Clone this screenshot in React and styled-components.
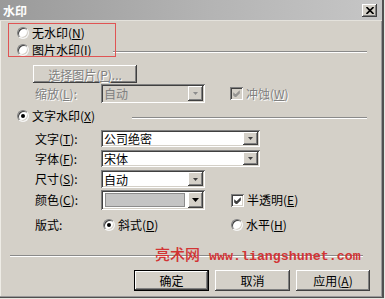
import React from "react";
import styled, { createGlobalStyle } from "styled-components";

const GlobalStyle = createGlobalStyle`
  html, body { margin: 0; padding: 0; background: #d4d0c8; }
  body {
    font-family: "Noto Sans CJK SC", "Liberation Sans", sans-serif;
    font-size: 12px;
    color: #000;
  }
  u { text-decoration: underline; text-underline-offset: 1px; }
`;

const Window = styled.div`
  position: relative;
  width: 385px;
  height: 299px;
  box-sizing: border-box;
  background: #d4d0c8;
  overflow: hidden;
  display: flex;
  flex-direction: column;
  box-shadow: inset -1px -1px #e8e6e0, inset -3px -2px #505050, inset -4px -3px #9a9a9a,
    inset 1px 0 #eeece6;
`;

const TitleBar = styled.div`
  height: 20px;
  margin-right: 3px;
  flex: none;
  display: flex;
  align-items: center;
  padding: 0 5px 0 3px;
  background: linear-gradient(to right, #9a9a9a 0%, #b4b4b4 55%, #c6c6c6 100%);
  border-bottom: 1px solid #e4e2dc;
`;

const Title = styled.span`
  color: #fff;
  font-weight: bold;
  font-size: 12px;
  letter-spacing: 0;
`;

const CloseBtn = styled.div`
  margin-left: auto;
  width: 15px;
  height: 13px;
  background: #d4d0c8;
  box-shadow: inset -1px -1px #404040, inset 1px 1px #fff, inset -2px -2px #808080;
  display: flex;
  align-items: center;
  justify-content: center;
`;

const Body = styled.div`
  display: flex;
  flex-direction: column;
`;

const Row = styled.div`
  display: flex;
  align-items: center;
  height: ${(p) => p.$h}px;
  margin-top: ${(p) => p.$mt}px;
  padding-left: ${(p) => p.$indent}px;
  padding-right: ${(p) => p.$right || 0}px;
  box-sizing: border-box;
`;

const FieldRow = styled.div`
  display: grid;
  grid-template-columns: 66px 129px auto;
  align-items: center;
  height: ${(p) => p.$h}px;
  margin-top: ${(p) => p.$mt}px;
  padding-left: 35px;
`;

const Caption = styled.span`
  white-space: nowrap;
  line-height: 14px;
  color: ${(p) => (p.$disabled ? "#808080" : "#000")};
  text-shadow: ${(p) => (p.$disabled ? "1px 1px 0 #fff" : "none")};
`;

const RadioWrap = styled.label`
  display: flex;
  align-items: center;
  gap: 3px;
  padding-left: ${(p) => p.$pad || 0}px;
`;

const RadioCircle = styled.span`
  width: 12px;
  height: 12px;
  border-radius: 50%;
  box-sizing: border-box;
  background: #fff;
  border: 1px solid;
  border-color: #808080 #f4f4f4 #f4f4f4 #808080;
  box-shadow: inset 1px 1px #404040, inset -1px -1px #d4d0c8;
  display: flex;
  align-items: center;
  justify-content: center;
  flex: none;
`;

const Dot = styled.span`
  width: 4px;
  height: 4px;
  border-radius: 50%;
  background: #000;
`;

const Radio = ({ checked, pad, children }) => (
  <RadioWrap $pad={pad}>
    <RadioCircle>{checked && <Dot />}</RadioCircle>
    <Caption>{children}</Caption>
  </RadioWrap>
);

const CheckWrap = styled.label`
  display: flex;
  align-items: center;
  gap: 3px;
  padding-left: ${(p) => p.$pad || 0}px;
`;

const CheckBox = styled.span`
  width: 13px;
  height: 13px;
  box-sizing: border-box;
  flex: none;
  background: ${(p) => (p.$disabled ? "#d4d0c8" : "#fff")};
  box-shadow: inset 1px 1px #808080, inset -1px -1px #fff, inset 2px 2px #404040,
    inset -2px -2px #d4d0c8;
  display: flex;
  align-items: center;
  justify-content: center;
`;

const Check = ({ disabled, pad, children }) => (
  <CheckWrap $pad={pad}>
    <CheckBox $disabled={disabled}>
      <svg width="7" height="7" viewBox="0 0 7 7">
        <path
          d="M0 2.5 L2.5 5 L7 0.5 M0 3.5 L2.5 6 L7 1.5 M0 4.5 L2.5 7 L7 2.5"
          stroke={disabled ? "#808080" : "#000"}
          strokeWidth="1"
          fill="none"
        />
      </svg>
    </CheckBox>
    <Caption $disabled={disabled}>{children}</Caption>
  </CheckWrap>
);

const Etched = styled.div`
  flex: 1;
  height: 0;
  border-top: 1px solid #8a8a8a;
  border-bottom: 1px solid #fff;
  margin-left: ${(p) => p.$ml}px;
  margin-top: ${(p) => p.$mt || 0}px;
`;

const SelectBox = styled.div`
  width: ${(p) => p.$w}px;
  height: ${(p) => p.$h}px;
  grid-column: ${(p) => (p.$span ? "span 2" : "auto")};
  box-sizing: border-box;
  padding: 2px;
  background: ${(p) => (p.$disabled ? "#d4d0c8" : "#fff")};
  box-shadow: inset 1px 1px #808080, inset -1px -1px #fff, inset 2px 2px #404040,
    inset -2px -2px #d4d0c8;
  display: flex;
  align-items: center;
`;

const SelectText = styled.span`
  flex: 1;
  padding-left: 1px;
  line-height: 13px;
  white-space: nowrap;
  color: ${(p) => (p.$disabled ? "#808080" : "#000")};
`;

const Swatch = styled.span`
  flex: 1;
  align-self: stretch;
  margin: 1px 3px 1px 2px;
  background: #c4c4c4;
  border: 1px solid #8c8c8c;
`;

const ArrowBtn = styled.span`
  width: 15px;
  align-self: stretch;
  flex: none;
  background: #d4d0c8;
  box-shadow: inset -1px -1px #404040, inset 1px 1px #fff, inset -2px -2px #808080;
  display: flex;
  align-items: center;
  justify-content: center;
`;

const Select = ({ w, h, span, disabled, swatch, children }) => (
  <SelectBox $w={w} $h={h} $span={span} $disabled={disabled}>
    {swatch ? <Swatch /> : <SelectText $disabled={disabled}>{children}</SelectText>}
    <ArrowBtn>
      {swatch ? (
        <svg width="7" height="4" viewBox="0 0 7 4">
          <path d="M0 0 H7 L3.5 4 Z" fill="#000" />
        </svg>
      ) : (
        <svg width="5" height="3" viewBox="0 0 5 3">
          <path d="M0 0 H5 L2.5 3 Z" fill={disabled ? "#8c8c8c" : "#404040"} />
        </svg>
      )}
    </ArrowBtn>
  </SelectBox>
);

const Button = styled.div`
  width: ${(p) => p.$w}px;
  height: ${(p) => p.$h}px;
  box-sizing: border-box;
  background: #d4d0c8;
  display: flex;
  align-items: center;
  justify-content: center;
  white-space: nowrap;
  color: ${(p) => (p.$disabled ? "#808080" : "#000")};
  text-shadow: ${(p) => (p.$disabled ? "1px 1px 0 #fff" : "none")};
  border: ${(p) => (p.$default ? "1px solid #000" : "none")};
  box-shadow: inset -1px -1px #404040, inset 1px 1px #fff, inset -2px -2px #808080;
`;

const ButtonBar = styled.div`
  display: flex;
  justify-content: flex-end;
  gap: 6px;
  margin-top: ${(p) => p.$mt}px;
  padding-right: 15px;
`;

const Annotation = styled.div`
  position: absolute;
  left: 8px;
  top: 23px;
  width: 108px;
  height: 34px;
  box-sizing: border-box;
  border: 1px solid #e05454;
  pointer-events: none;
`;

const Watermark = styled.div`
  position: absolute;
  left: 155px;
  top: 243px;
  display: flex;
  align-items: baseline;
  gap: 9px;
  color: #d23434;
  white-space: nowrap;
`;

const WmCn = styled.span`
  font-family: "Noto Sans CJK SC", sans-serif;
  font-size: 15px;
  font-weight: 500;
  letter-spacing: 0;
`;

const WmEn = styled.span`
  font-family: "Liberation Mono", monospace;
  font-size: 13.3px;
  font-weight: bold;
`;

export default function App() {
  return (
    <>
      <GlobalStyle />
      <Window>
        <TitleBar>
          <Title>水印</Title>
          <CloseBtn>
            <svg width="8" height="7" viewBox="0 0 8 7">
              <path d="M0.5 0 L7.5 7 M7.5 0 L0.5 7" stroke="#000" strokeWidth="1.6" />
            </svg>
          </CloseBtn>
        </TitleBar>
        <Body>
          <Row $h={16} $mt={4} $indent={17}>
            <Radio>无水印(<u>N</u>)</Radio>
          </Row>
          <Row $h={17} $mt={0} $indent={17} $right={18}>
            <Radio>图片水印(<u>I</u>)</Radio>
            <Etched $ml={21} $mt={5} />
          </Row>
          <Row $h={18} $mt={7} $indent={33}>
            <Button $w={104} $h={18} $disabled>
              选择图片(<u>P</u>)...
            </Button>
          </Row>
          <FieldRow $h={19} $mt={1}>
            <Caption $disabled>缩放(<u>L</u>):</Caption>
            <Select w={104} h={19} disabled>
              自动
            </Select>
            <Check disabled>冲蚀(<u>W</u>)</Check>
          </FieldRow>
          <Row $h={16} $mt={5} $indent={17} $right={18}>
            <Radio checked>文字水印(<u>X</u>)</Radio>
            <Etched $ml={37} $mt={4} />
          </Row>
          <FieldRow $h={17} $mt={6}>
            <Caption>文字(<u>T</u>):</Caption>
            <Select w={159} h={17} span>
              公司绝密
            </Select>
          </FieldRow>
          <FieldRow $h={17} $mt={3}>
            <Caption>字体(<u>F</u>):</Caption>
            <Select w={159} h={17} span>
              宋体
            </Select>
          </FieldRow>
          <FieldRow $h={18} $mt={3}>
            <Caption>尺寸(<u>S</u>):</Caption>
            <Select w={104} h={18}>
              自动
            </Select>
          </FieldRow>
          <FieldRow $h={20} $mt={2}>
            <Caption>颜色(<u>C</u>):</Caption>
            <Select w={104} h={20} swatch />
            <Check pad={1}>半透明(<u>E</u>)</Check>
          </FieldRow>
          <FieldRow $h={16} $mt={7}>
            <Caption>版式:</Caption>
            <Radio checked pad={2}>
              斜式(<u>D</u>)
            </Radio>
            <Radio pad={1}>水平(<u>H</u>)</Radio>
          </FieldRow>
          <Row $h={2} $mt={22} $indent={10} $right={22}>
            <Etched $ml={0} />
          </Row>
          <ButtonBar $mt={13}>
            <Button $w={75} $h={21} $default>
              确定
            </Button>
            <Button $w={75} $h={21}>
              取消
            </Button>
            <Button $w={74} $h={21}>
              应用(<u>A</u>)
            </Button>
          </ButtonBar>
        </Body>
        <Annotation />
        <Watermark>
          <WmCn>亮术网</WmCn>
          <WmEn>www.liangshunet.com</WmEn>
        </Watermark>
      </Window>
    </>
  );
}
